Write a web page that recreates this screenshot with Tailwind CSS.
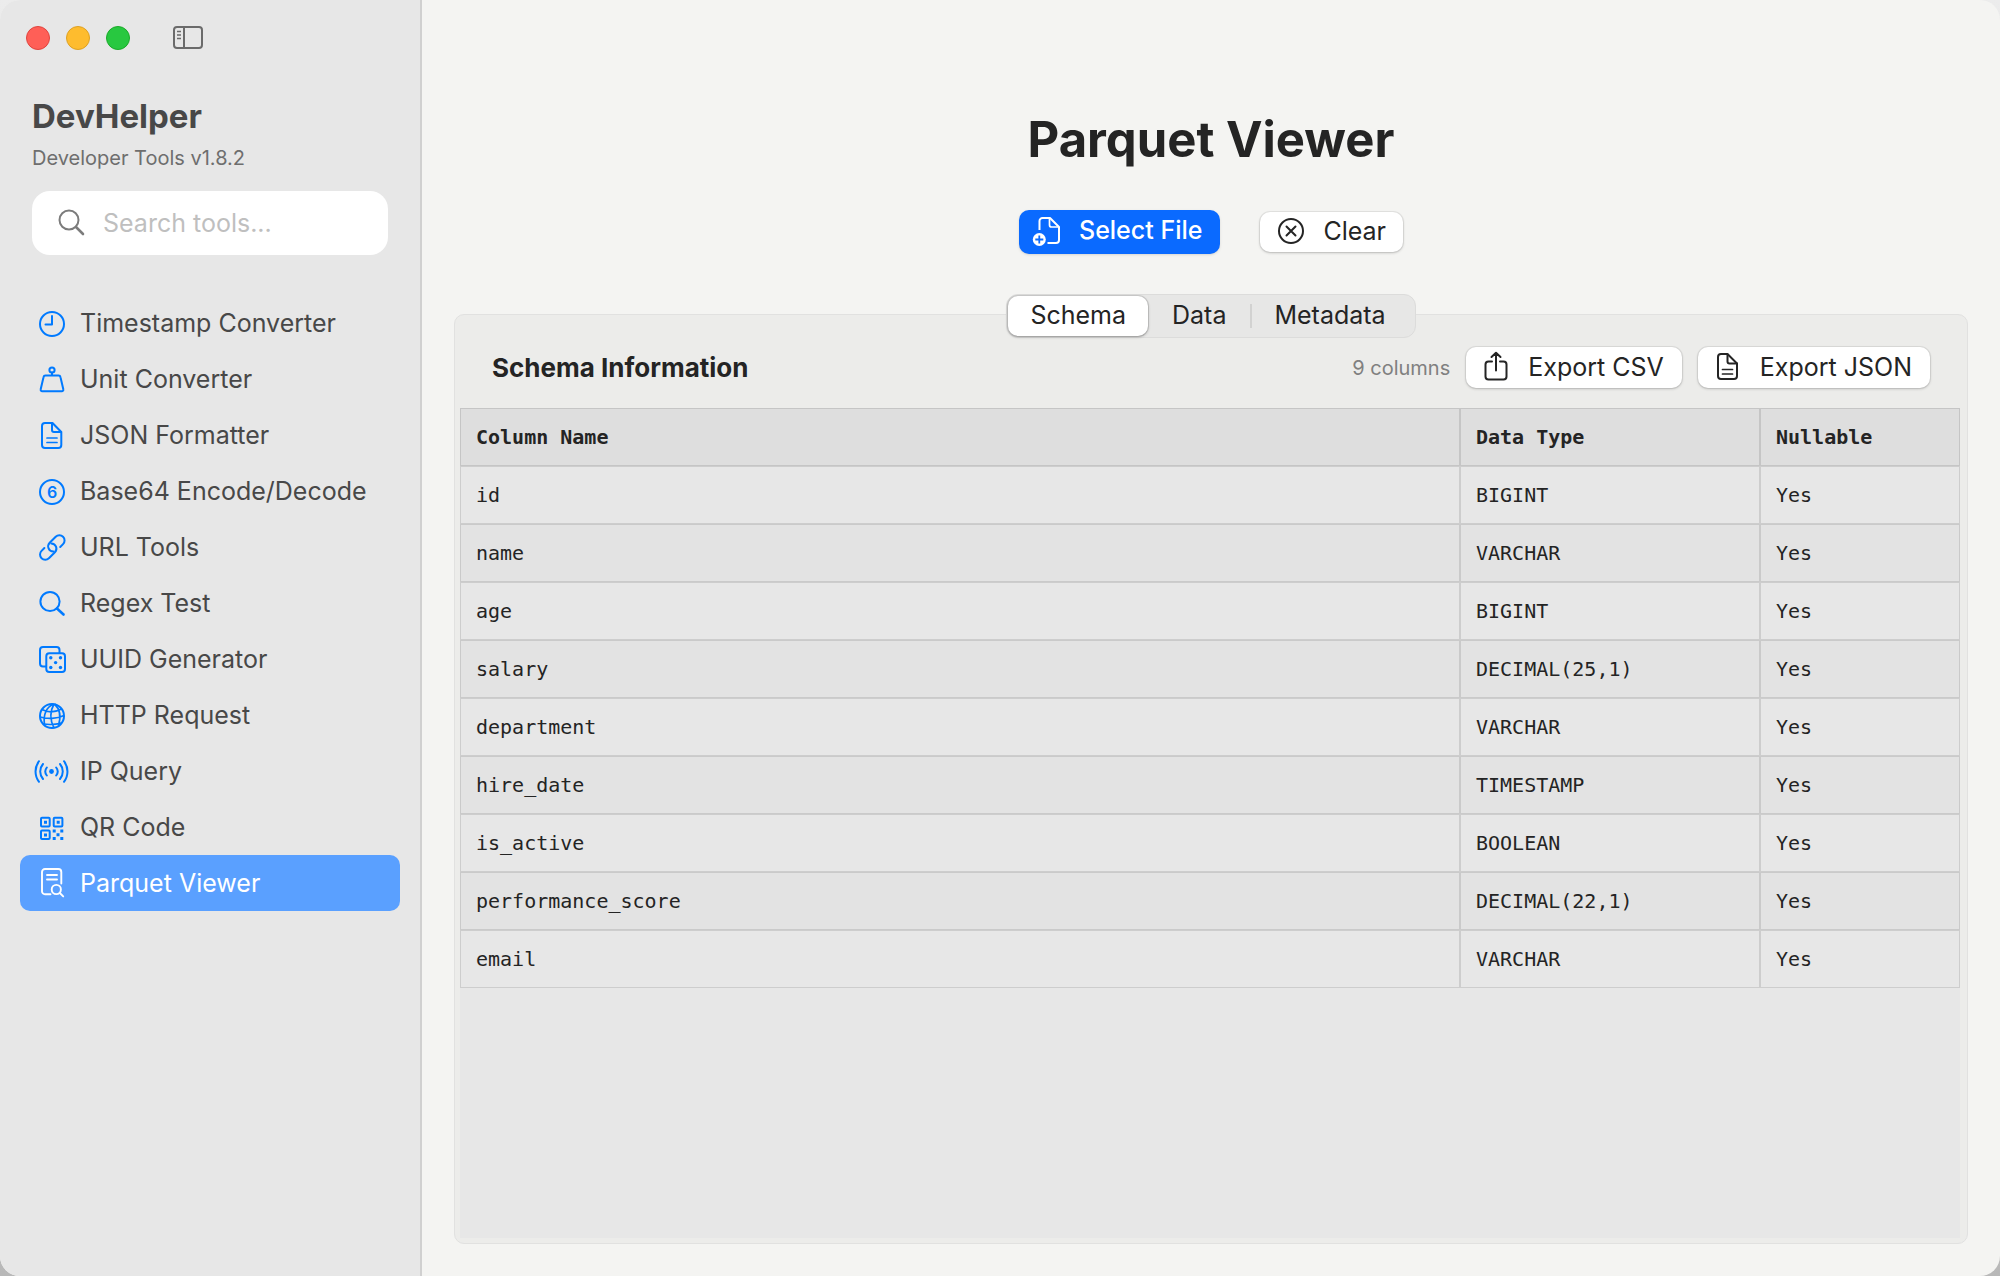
<!DOCTYPE html>
<html lang="en">
<head>
<meta charset="utf-8">
<meta name="viewport" content="width=device-width, initial-scale=1">
<title>DevHelper</title>
<script src="https://cdn.jsdelivr.net/npm/@tailwindcss/browser@4"></script>
</head>
<body class="min-h-screen bg-linear-to-b from-[#ececec] to-[#b8b8b8] font-[Inter,sans-serif] text-[25px] leading-8 text-[#242424]">
<div class="flex min-h-screen overflow-hidden rounded-[20px] bg-[#f4f4f2]">

  <!-- Sidebar -->
  <aside class="flex w-[422px] shrink-0 flex-col border-r-2 border-[#d0d0d0] bg-[#e7e7e7] text-[#484848]">
    <div class="flex items-center gap-4 px-[26px] pt-[26px]">
      <button aria-label="Close" class="size-6 rounded-full border border-[#e0443e] bg-[#ff5f57]"></button>
      <button aria-label="Minimize" class="size-6 rounded-full border border-[#dea123] bg-[#febc2e]"></button>
      <button aria-label="Zoom" class="size-6 rounded-full border border-[#1aab29] bg-[#28c840]"></button>
      <button aria-label="Toggle sidebar" class="ml-[26px] text-[#6b6b6b]">
        <svg class="block h-6 w-8" viewBox="0 0 32 24" fill="none" stroke="currentColor" stroke-width="2"><rect x="2" y="1" width="28" height="21" rx="3"/><path d="M12 1v21"/><path d="M5 5.500h4M5 9h4M5 12.500h4" stroke-width="1.300"/></svg>
      </button>
    </div>

    <header class="px-8 pt-[46px]">
      <h1 class="text-[33px] leading-10 font-bold">DevHelper</h1>
      <p class="mt-2 text-xl leading-7 text-[#6e6e6e]">Developer Tools v1.8.2</p>
      <label class="mt-[19px] flex h-16 items-center gap-[17px] rounded-[18px] bg-white px-[26px]">
        <svg class="size-7 shrink-0 text-[#7c7c7c]" viewBox="0 0 28 28" fill="none" stroke="currentColor" stroke-width="2" stroke-linecap="round"><circle cx="11" cy="11" r="9.500"/><path d="M18 18l7 7" stroke-width="2.600"/></svg>
        <input type="search" aria-label="Search tools" placeholder="Search tools..." class="min-w-0 flex-1 bg-transparent outline-none placeholder:text-[#bfbfbf]">
      </label>
    </header>

    <nav class="flex flex-col px-5 pt-10">
      <a href="#timestamp" class="flex h-14 items-center gap-3 rounded-[10px] pl-4">
        <svg class="size-8 shrink-0 overflow-visible text-[#007aff]" viewBox="0 0 32 32" fill="none" stroke="currentColor" stroke-width="2" stroke-linecap="round" stroke-linejoin="round"><circle cx="16" cy="17" r="12"/><path d="M16 9v8.500H9.500"/></svg>
        Timestamp Converter
      </a>
      <a href="#unit" class="flex h-14 items-center gap-3 rounded-[10px] pl-4">
        <svg class="size-8 shrink-0 overflow-visible text-[#007aff]" viewBox="0 0 32 32" fill="none" stroke="currentColor" stroke-width="2" stroke-linecap="round" stroke-linejoin="round"><circle cx="16" cy="7" r="2.600"/><path d="M16 9.600v3M9.500 12.600h13a2 2 0 0 1 2 1.600l2.800 12a1.600 1.600 0 0 1-1.600 2.100H6.300a1.600 1.600 0 0 1-1.600-2.100l2.800-12a2 2 0 0 1 2-1.600z"/></svg>
        Unit Converter
      </a>
      <a href="#json" class="flex h-14 items-center gap-3 rounded-[10px] pl-4">
        <svg class="size-8 shrink-0 overflow-visible text-[#007aff]" viewBox="0 0 32 32" fill="none" stroke="currentColor" stroke-width="2" stroke-linecap="round" stroke-linejoin="round"><path d="M9 4h7.500L25.300 13v13a3 3 0 0 1-3 3H9a3 3 0 0 1-3-3V7a3 3 0 0 1 3-3z"/><path d="M16 4.500V11a2 2 0 0 0 2 2h7"/><path d="M11 19h10M11 23.500h10" stroke-width="1.700"/></svg>
        JSON Formatter
      </a>
      <a href="#base64" class="flex h-14 items-center gap-3 rounded-[10px] pl-4">
        <svg class="size-8 shrink-0 overflow-visible text-[#007aff]" viewBox="0 0 32 32" fill="none" stroke="currentColor" stroke-width="2"><circle cx="16" cy="17" r="12"/><text x="16" y="22.500" text-anchor="middle" class="fill-current stroke-none text-[16px] font-semibold">6</text></svg>
        Base64 Encode/Decode
      </a>
      <a href="#url" class="flex h-14 items-center gap-3 rounded-[10px] pl-4">
        <svg class="size-8 shrink-0 overflow-visible text-[#007aff]" viewBox="0 0 32 32" fill="none" stroke="currentColor" stroke-width="2" stroke-linecap="round"><g transform="translate(16.300 16.500) rotate(-45)"><path d="M-6 -5.200H-10a5.200 5.200 0 0 0 0 10.400h8.500a5.200 5.200 0 0 0 3.700-8.800"/><path d="M6 5.200H10a5.200 5.200 0 0 0 0-10.400h-8.500a5.200 5.200 0 0 0-3.700 8.800"/></g></svg>
        URL Tools
      </a>
      <a href="#regex" class="flex h-14 items-center gap-3 rounded-[10px] pl-4">
        <svg class="size-8 shrink-0 overflow-visible text-[#007aff]" viewBox="0 0 32 32" fill="none" stroke="currentColor" stroke-width="2" stroke-linecap="round"><circle cx="14" cy="14.500" r="9.600"/><path d="M21 21.500l6.500 6" stroke-width="2.600"/></svg>
        Regex Test
      </a>
      <a href="#uuid" class="flex h-14 items-center gap-3 rounded-[10px] pl-4">
        <svg class="size-8 shrink-0 overflow-visible text-[#007aff]" viewBox="0 0 32 32" fill="none" stroke="currentColor" stroke-width="2"><path d="M10.300 23.500H7a3 3 0 0 1-3-3V7a3 3 0 0 1 3-3h13.500a3 3 0 0 1 3 3v3.300"/><rect x="10.300" y="10.300" width="18.700" height="18.700" rx="3"/><g fill="currentColor" stroke="none"><circle cx="14.800" cy="14.800" r="1.700"/><circle cx="24.500" cy="14.800" r="1.700"/><circle cx="19.600" cy="19.600" r="1.700"/><circle cx="14.800" cy="24.500" r="1.700"/><circle cx="24.500" cy="24.500" r="1.700"/></g></svg>
        UUID Generator
      </a>
      <a href="#http" class="flex h-14 items-center gap-3 rounded-[10px] pl-4">
        <svg class="size-8 shrink-0 overflow-visible text-[#007aff]" viewBox="0 0 32 32" fill="none" stroke="currentColor" stroke-width="1.700"><circle cx="16" cy="17" r="12" stroke-width="2"/><path d="M17.500 5C10 8.500 7 15 8.500 26M18 5c-4 7-4.500 15 0 24M18.500 5c5.500 5 6.500 13 4 21.500M6 10.500c5.500 3 12.500 3.200 19.500-.5M4 18c7 2 17 2 24-1.500M7 25c6 .8 13 .5 18.500-1"/></svg>
        HTTP Request
      </a>
      <a href="#ip" class="flex h-14 items-center gap-3 rounded-[10px] pl-4">
        <svg class="size-8 shrink-0 overflow-visible text-[#007aff]" viewBox="0 0 32 32" fill="none" stroke="currentColor" stroke-width="2" stroke-linecap="round"><circle cx="15.500" cy="16.500" r="2.400" fill="currentColor" stroke="none"/><path d="M10.800 12.500a6.500 6.500 0 0 0 0 8M7 9a11.500 11.500 0 0 0 0 15M3 6.200a17 17 0 0 0 0 20.600M20.200 12.500a6.500 6.500 0 0 1 0 8M24 9a11.500 11.500 0 0 1 0 15M28 6.200a17 17 0 0 1 0 20.600"/></svg>
        IP Query
      </a>
      <a href="#qr" class="flex h-14 items-center gap-3 rounded-[10px] pl-4">
        <svg class="size-8 shrink-0 overflow-visible text-[#007aff]" viewBox="0 0 32 32" fill="none" stroke="currentColor" stroke-width="2"><rect x="5" y="6.700" width="8.700" height="8.700" rx="1"/><rect x="17.700" y="6.700" width="8.700" height="8.700" rx="1"/><rect x="5" y="19.400" width="8.700" height="8.700" rx="1"/><g fill="currentColor" stroke="none"><path d="M8 9.700h3v3H8zM20.700 9.700h3v3h-3zM8 22.400h3v3H8zM16.700 18.400h3v3h-3zM24.300 18.400h3v3h-3zM20.500 22.200h3v3h-3zM16.700 26h3v3h-3zM24.300 26h3v3h-3z"/></g></svg>
        QR Code
      </a>
      <a href="#parquet" aria-current="page" class="flex h-14 items-center gap-3 rounded-[10px] bg-[#5aa0ff] pl-4 text-white">
        <svg class="size-8 shrink-0 overflow-visible" viewBox="0 0 32 32" fill="none" stroke="currentColor" stroke-width="1.900" stroke-linecap="round"><path d="M14.500 27.300H9a3 3 0 0 1-3-3V5a3 3 0 0 1 3-3h13.300a3 3 0 0 1 3 3v11.500M11 8h10M11 12.500h10"/><circle cx="20.300" cy="22.500" r="4.600"/><path d="M23.800 26l3.400 3.400"/></svg>
        Parquet Viewer
      </a>
    </nav>
  </aside>

  <!-- Content -->
  <main class="flex min-w-0 flex-1 flex-col items-center px-8 pt-[110px] pb-8">
    <h2 class="text-[49px] leading-[60px] font-bold">Parquet Viewer</h2>

    <div class="mt-10 flex items-center gap-10">
      <button class="flex h-11 items-center gap-[18px] rounded-[10px] bg-[#0a6aff] pr-[18px] pb-1 pl-3.5 font-medium text-white shadow-sm">
        <svg class="size-7 overflow-visible" viewBox="0 0 28 28" fill="none" stroke="currentColor" stroke-width="2" stroke-linejoin="round"><path d="M6.500 14V5a3 3 0 0 1 3-3H17l9 9v13a3 3 0 0 1-3 3h-8.500"/><path d="M16.500 2.500V9a2 2 0 0 0 2 2H26" stroke-width="1.700"/><circle cx="6.300" cy="23.500" r="6.500" fill="currentColor" stroke="none"/><path d="M6.300 19.500v8M2.300 23.500h8" class="stroke-[#0a6aff]" stroke-width="1.800"/></svg>
        Select File
      </button>
      <button class="flex h-10 items-center gap-[18px] rounded-[10px] bg-white px-[17px] pb-0.5 shadow-[0_0_0_1px_#0000000f,0_1px_3px_#00000033]">
        <svg class="size-7" viewBox="0 0 28 28" fill="none" stroke="currentColor" stroke-width="2" stroke-linecap="round"><circle cx="14" cy="14" r="12"/><path d="M9.500 9.500l9 9M18.500 9.500l-9 9"/></svg>
        Clear
      </button>
    </div>

    <div role="tablist" class="relative z-10 mt-10 -mb-6 flex h-11 items-center rounded-xl border border-[#dcdcdb] bg-[#e7e7e6] p-px">
      <button role="tab" aria-selected="true" class="h-10 rounded-[10px] bg-white px-[22px] pb-0.5 shadow-[0_0_0_1px_#0000001a,0_1px_3px_#0000004d]">Schema</button>
      <button role="tab" aria-selected="false" class="h-10 px-6 pb-0.5">Data</button>
      <span class="h-6 w-0.5 bg-[#d2d2d1]"></span>
      <button role="tab" aria-selected="false" class="h-10 pr-7 pb-0.5 pl-[22px]">Metadata</button>
    </div>

    <section class="flex w-full flex-1 flex-col rounded-[10px] border border-[#e1e1e0] bg-[#ececea] pr-[7px] pb-[5px] pl-[5px]">
      <header class="flex items-center gap-4 pt-8 pr-[30px] pb-5 pl-8">
        <h3 class="mr-auto text-[26px] font-bold">Schema Information</h3>
        <span class="text-xl text-[#808080]">9 columns</span>
        <button class="flex h-[41px] items-center gap-5 rounded-[10px] bg-white px-[18px] pb-0.5 shadow-[0_0_0_1px_#0000000f,0_1px_3px_#00000033]">
          <svg class="h-8 w-6" viewBox="0 0 24 32" fill="none" stroke="currentColor" stroke-width="2" stroke-linecap="round" stroke-linejoin="round"><path d="M8 10.500H4.500a3 3 0 0 0-3 3v12a3 3 0 0 0 3 3h15a3 3 0 0 0 3-3v-12a3 3 0 0 0-3-3H16M12 19.500V2M7.500 6L12 1.800 16.500 6"/></svg>
          Export CSV
        </button>
        <button class="flex h-[41px] items-center gap-5 rounded-[10px] bg-white px-[18px] pb-0.5 shadow-[0_0_0_1px_#0000000f,0_1px_3px_#00000033]">
          <svg class="h-8 w-6" viewBox="0 0 24 32" fill="none" stroke="currentColor" stroke-width="2" stroke-linecap="round" stroke-linejoin="round"><path d="M5 3h6.500l9.500 9.500V25a3 3 0 0 1-3 3H5a3 3 0 0 1-3-3V6a3 3 0 0 1 3-3z"/><path d="M11.500 3.500v7a2 2 0 0 0 2 2H21"/><path d="M6.500 18.500h10M6.500 23h10" stroke-width="1.700"/></svg>
          Export JSON
        </button>
      </header>

      <div class="flex-1 bg-[#e7e7e7]">
        <table class="w-full table-fixed border-separate border-spacing-0 text-left font-['DejaVu_Sans_Mono',monospace] text-xl *:*:*:h-[58px] *:*:*:border *:*:*:border-black/11 *:*:*:px-[15px]">
          <thead class="bg-[#dedede] font-bold">
            <tr><th class="w-2/3">Column Name</th><th class="w-1/5">Data Type</th><th>Nullable</th></tr>
          </thead>
          <tbody class="*:even:bg-[#e3e3e3]">
            <tr><td>id</td><td>BIGINT</td><td>Yes</td></tr>
            <tr><td>name</td><td>VARCHAR</td><td>Yes</td></tr>
            <tr><td>age</td><td>BIGINT</td><td>Yes</td></tr>
            <tr><td>salary</td><td>DECIMAL(25,1)</td><td>Yes</td></tr>
            <tr><td>department</td><td>VARCHAR</td><td>Yes</td></tr>
            <tr><td>hire_date</td><td>TIMESTAMP</td><td>Yes</td></tr>
            <tr><td>is_active</td><td>BOOLEAN</td><td>Yes</td></tr>
            <tr><td>performance_score</td><td>DECIMAL(22,1)</td><td>Yes</td></tr>
            <tr><td>email</td><td>VARCHAR</td><td>Yes</td></tr>
          </tbody>
        </table>
      </div>
    </section>
  </main>
</div>
</body>
</html>
